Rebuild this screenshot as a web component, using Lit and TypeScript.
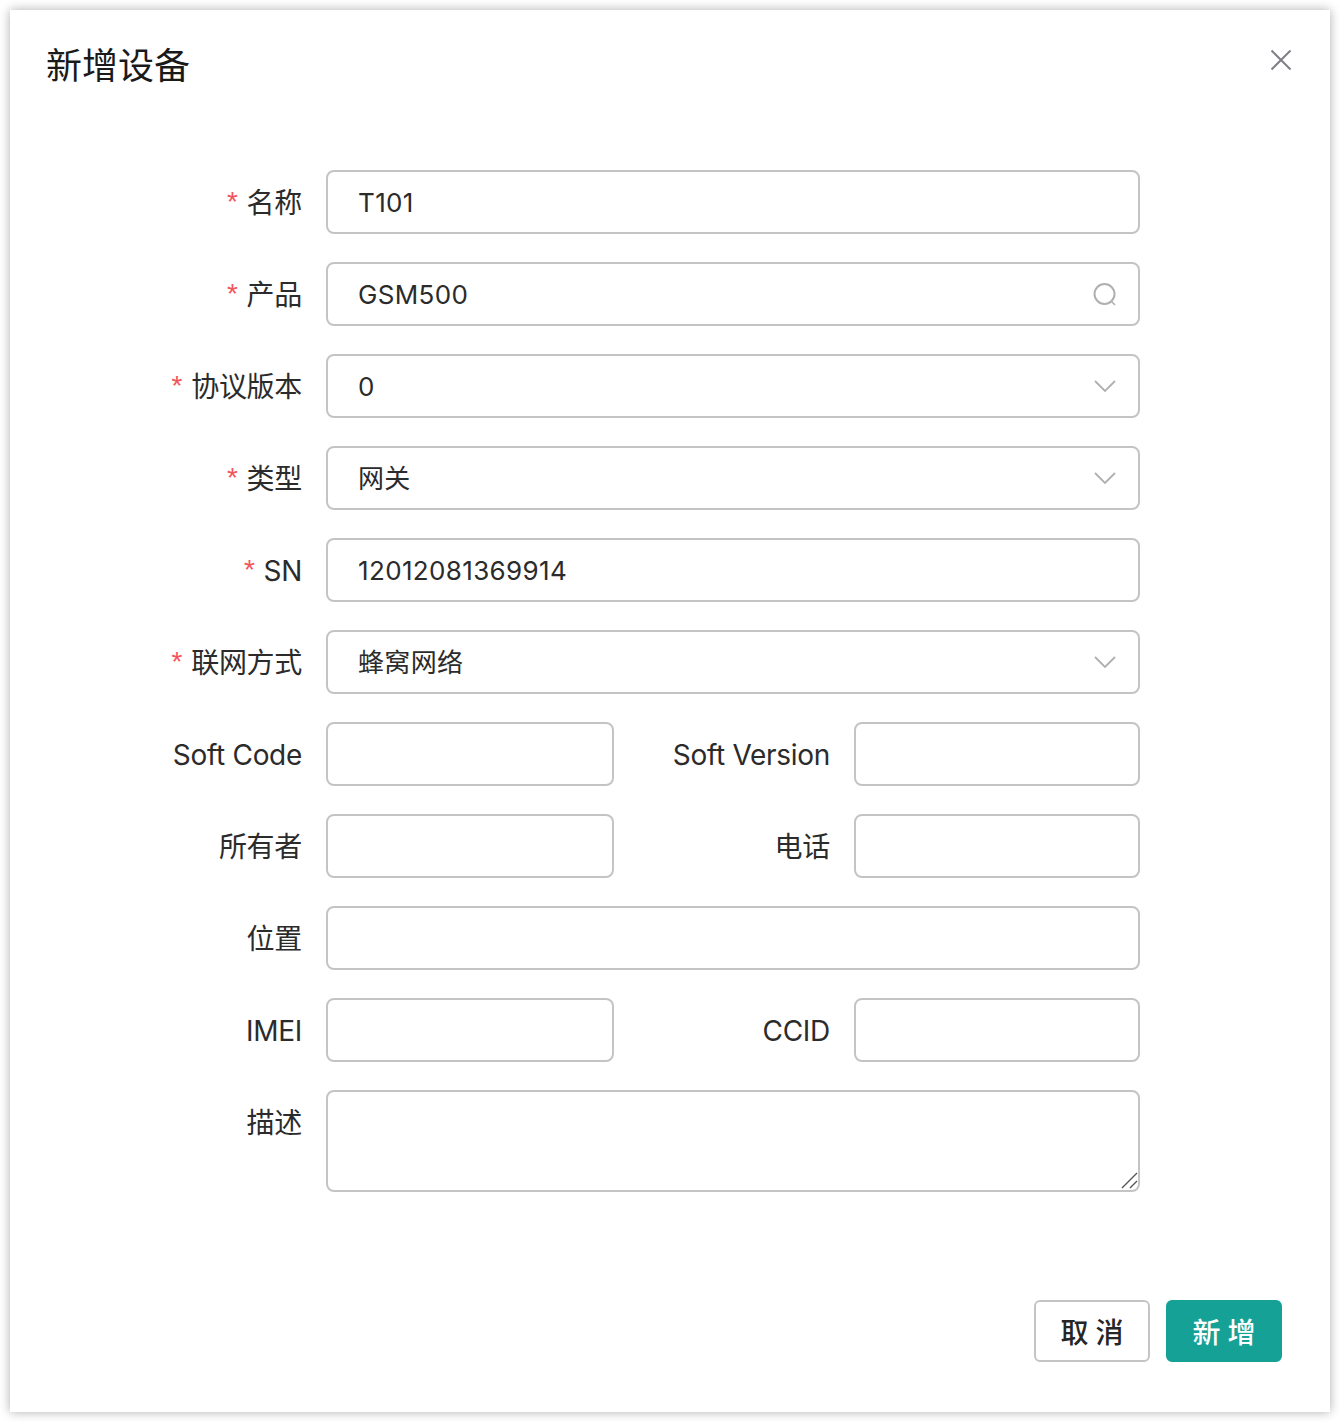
import { LitElement, html, css, nothing } from "lit";
import { customElement } from "lit/decorators.js";

const search = html`<svg class="ic" width="26" height="26" viewBox="0 0 26 26" fill="none" stroke="#b0b0b0" stroke-width="2"><circle cx="12.5" cy="13" r="10"/><path d="M19.5 20.5l3.5 3.5" stroke-width="1.6"/></svg>`;
const chevron = html`<svg class="ic" width="26" height="26" viewBox="0 0 26 26" fill="none" stroke="#b0b0b0" stroke-width="1.8"><path d="M3 8l10 10L23 8"/></svg>`;

@customElement("app-root")
export class AppRoot extends LitElement {
  static styles = css`
    :host { display: block; width: 1340px; height: 1422px; background: #fff; padding: 10px; box-sizing: border-box;
      font-family: Inter, "Noto Sans CJK SC", sans-serif; color: #262626; }
    .modal { height: 1402px; width: 1320px; box-sizing: border-box; background: #fff; display: flex; flex-direction: column;
      box-shadow: 0 0 10px rgba(0,0,0,.32); }
    .head { display: flex; justify-content: space-between; align-items: flex-start; padding: 28px 38px 0 36px; height: 130px; box-sizing: border-box; }
    .title { font-size: 36px; line-height: 50px; color: #1a1a1a; font-family: "Noto Sans CJK SC", sans-serif; }
    .close { margin-top: 11px; }
    .form { display: flex; flex-direction: column; gap: 28px; padding-top: 30px; }
    .row { display: flex; height: 64px; }
    .row.tall { height: 102px; }
    .label { width: 316px; padding: 0 24px 0 0; box-sizing: border-box; text-align: right; font-size: 28px; line-height: 66px; white-space: nowrap; color: #2b2b2b; letter-spacing: -.3px; }
    .label.second { width: 240px; }
    .req { color: #f5535a; font-family: "Liberation Sans", sans-serif; font-size: 28px; margin-right: 9px; position: relative; top: -2px; }
    .field { width: 814px; box-sizing: border-box; border: 2px solid #c4c4c4; border-radius: 8px; display: flex; align-items: center; justify-content: space-between;
      padding: 0 20px 0 30px; font-size: 26px; color: #2b2b2b; position: relative; letter-spacing: .35px; line-height: 36px; }
    .field span { padding-top: 2px; }
    .field.half { width: 288px; }
    .field.half2 { width: 286px; }
    .grip { position: absolute; right: 0; bottom: 1px; }
    .foot { margin-top: auto; display: flex; justify-content: flex-end; gap: 16px; padding: 0 48px 50px 0; }
    .btn { width: 116px; height: 62px; box-sizing: border-box; border-radius: 6px; border: 2px solid #c4c4c4; font-size: 28px; font-weight: 500; display: flex; align-items: center; justify-content: center; color: #262626; font-family: "Noto Sans CJK SC", sans-serif; letter-spacing: 7px; padding-left: 7px; }
    .btn.primary { background: #16a196; border-color: #16a196; color: #fff; }
    .ic { display: block; }
  `;

  private lab(t: string, req = false, second = false) {
    return html`<div class="label ${second ? "second" : ""}">${req ? html`<span class="req">*</span>` : nothing}${t}</div>`;
  }
  private full(label: string, value: string, req = true, icon: unknown = nothing) {
    return html`<div class="row">${this.lab(label, req)}<div class="field"><span>${value}</span>${icon}</div></div>`;
  }
  private pair(a: string, b: string) {
    return html`<div class="row">${this.lab(a)}<div class="field half"></div>${this.lab(b, false, true)}<div class="field half2"></div></div>`;
  }

  render() {
    return html`<div class="modal">
      <div class="head">
        <div class="title">新增设备</div>
        <svg class="close" width="22" height="22" viewBox="0 0 22 22" stroke="#7d7f86" stroke-width="2" fill="none"><path d="M1.5 1.5l19 19M20.5 1.5l-19 19"/></svg>
      </div>
      <div class="form">
        ${this.full("名称", "T101")}
        ${this.full("产品", "GSM500", true, search)}
        ${this.full("协议版本", "0", true, chevron)}
        ${this.full("类型", "网关", true, chevron)}
        ${this.full("SN", "12012081369914")}
        ${this.full("联网方式", "蜂窝网络", true, chevron)}
        ${this.pair("Soft Code", "Soft Version")}
        ${this.pair("所有者", "电话")}
        ${this.full("位置", "", false)}
        ${this.pair("IMEI", "CCID")}
        <div class="row tall">${this.lab("描述")}<div class="field">
          <svg class="grip" width="20" height="20" viewBox="0 0 20 20" stroke="#555" stroke-width="1.4" fill="none"><path d="M4 19L19 4M12 19l7-7"/></svg>
        </div></div>
      </div>
      <div class="foot">
        <div class="btn">取消</div>
        <div class="btn primary">新增</div>
      </div>
    </div>`;
  }
}
